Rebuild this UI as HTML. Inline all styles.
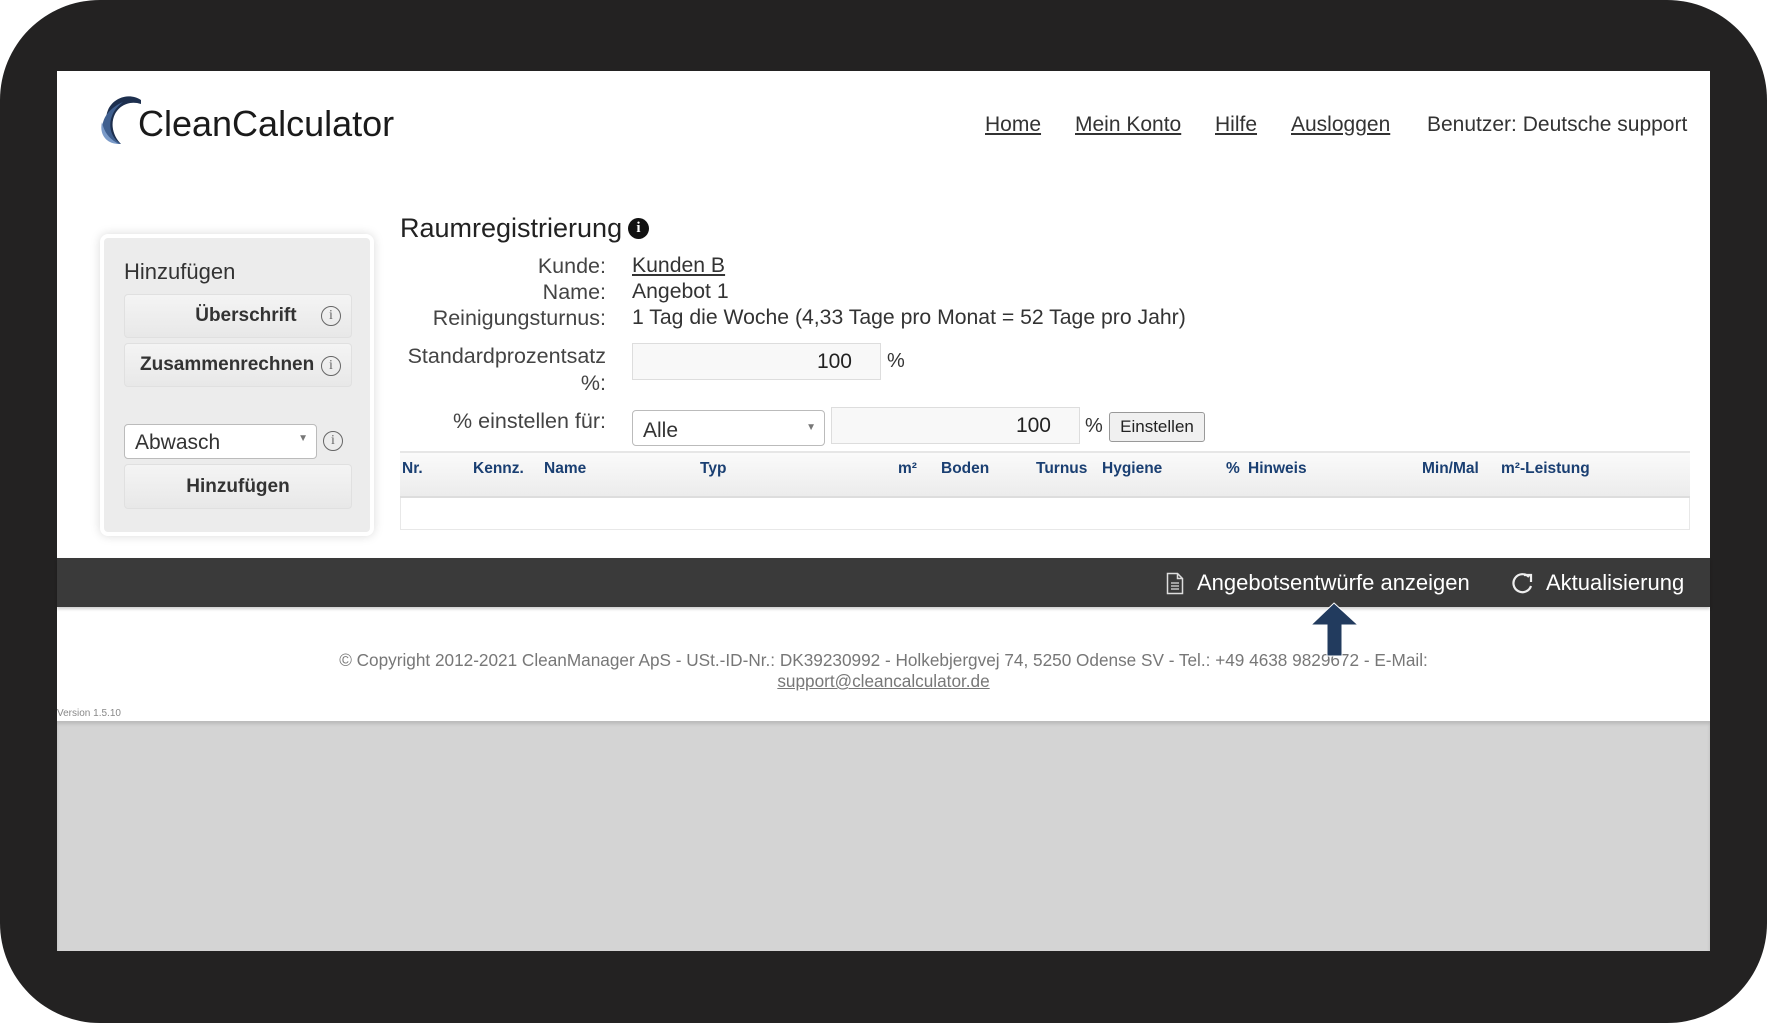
<!DOCTYPE html>
<html><head><meta charset="utf-8"><style>
*{box-sizing:border-box;margin:0;padding:0}
body{width:1767px;height:1023px;background:#fff;font-family:"Liberation Sans",sans-serif;position:relative;overflow:hidden}
.frame{position:absolute;left:0;top:0;width:1767px;height:1023px;background:#232222;border-radius:100px}
.page{position:absolute;left:57px;top:71px;width:1653px;height:650px;background:#fff}
.gray{position:absolute;left:57px;top:721px;width:1653px;height:230px;background:#d4d4d4;box-shadow:inset 0 3px 3px rgba(0,0,0,.12)}
.a{position:absolute;white-space:nowrap}
.nav{font-size:21px;color:#333;top:113px}
.nav u{text-decoration:underline}
.side{position:absolute;left:100px;top:234px;width:274px;height:302px;background:#ececec;border:4px solid #fff;border-radius:8px;box-shadow:0 0 10px rgba(0,0,0,.15)}
.btn{position:absolute;left:124px;width:228px;background:linear-gradient(#f4f4f4,#e8e8e8);border:1px solid #e0e0e0;border-radius:4px;font-weight:bold;font-size:19px;color:#333;text-align:center}
.ic{display:inline-block;width:20px;height:20px;border:1.5px solid #666;border-radius:50%;font:14px "Liberation Serif",serif;color:#666;text-align:center;line-height:18px}
.lbl{font-size:21.5px;color:#444;text-align:right;width:320px;left:286px}
.val{font-size:21.2px;color:#333;left:632px}
.inp{position:absolute;border:1px solid #ddd;background:#f8f8f8;font-size:21px;color:#222;text-align:right;padding-right:28px}
.th{position:absolute;top:460px;font-size:15.5px;font-weight:bold;color:#1a3f72}
</style></head><body>
<div class="frame"></div>
<div class="page"></div>
<div class="gray"></div>

<svg class="a" style="left:97px;top:94px" width="48" height="52" viewBox="0 0 48 52">
<path d="M44 6 C32 -2 16 4 11 16 C6 28 10 44 24 50 C16 42 13 30 18 20 C22 12 32 6 44 10Z" fill="#1d2f4e"/>
<path d="M26 8 C12 14 3 26 6 38 C8 46 16 50 24 50 C14 44 11 32 15 22 C17 16 21 12 26 8Z" fill="#3f5f8f"/>
<path d="M5 28 C2 40 9 50 22 50 C12 45 7 38 5 28Z" fill="#7a9ac8"/>
</svg>
<div class="a" style="left:138px;top:104px;font-size:36px;color:#1a1a1a;line-height:40px">CleanCalculator</div>

<div class="a nav" style="left:985px"><u>Home</u></div>
<div class="a nav" style="left:1075px"><u>Mein Konto</u></div>
<div class="a nav" style="left:1215px"><u>Hilfe</u></div>
<div class="a nav" style="left:1291px"><u>Ausloggen</u></div>
<div class="a nav" style="left:1427px">Benutzer: Deutsche support</div>

<div class="side"></div>
<div class="a" style="left:124px;top:259px;font-size:22px;color:#333">Hinzufügen</div>
<div class="btn" style="top:294px;height:44px;line-height:42px">&nbsp;&nbsp;&nbsp;Überschrift<span class="ic" style="position:absolute;right:10px;top:11px">i</span></div>
<div class="btn" style="top:343px;height:44px;line-height:42px;text-align:left;padding-left:15px">Zusammenrechnen<span class="ic" style="position:absolute;right:10px;top:12px">i</span></div>
<div class="a" style="left:124px;top:424px;width:193px;height:35px;background:#fff;border:1px solid #bbb;border-radius:4px;font-size:21px;color:#333;padding:6px 10px">Abwasch<span style="position:absolute;right:8px;top:8px;font-size:10px;color:#777">▼</span></div>
<span class="ic a" style="left:323px;top:431px">i</span>
<div class="btn" style="top:464px;height:45px;line-height:43px">Hinzufügen</div>

<div class="a" style="left:400px;top:213px;font-size:27px;color:#222">Raumregistrierung</div>
<div class="a" style="left:628px;top:218px;width:21px;height:21px;border-radius:50%;background:#111;color:#fff;font:bold 15px 'Liberation Serif',serif;text-align:center;line-height:21px">i</div>

<div class="a lbl" style="top:254px">Kunde:</div>
<div class="a val" style="top:254px"><u>Kunden B</u></div>
<div class="a lbl" style="top:280px">Name:</div>
<div class="a val" style="top:280px">Angebot 1</div>
<div class="a lbl" style="top:306px">Reinigungsturnus:</div>
<div class="a val" style="top:306px">1 Tag die Woche (4,33 Tage pro Monat = 52 Tage pro Jahr)</div>
<div class="a lbl" style="top:344px">Standardprozentsatz</div>
<div class="a lbl" style="top:371px">%:</div>
<div class="inp" style="left:632px;top:343px;width:249px;height:37px;line-height:35px">100</div>
<div class="a" style="left:887px;top:350px;font-size:20px;color:#333">%</div>
<div class="a lbl" style="top:409px">% einstellen für:</div>
<div class="a" style="left:632px;top:410px;width:193px;height:36px;background:#fff;border:1px solid #bbb;border-radius:4px;font-size:21px;color:#333;padding:8px 10px">Alle<span style="position:absolute;right:8px;top:11px;font-size:10px;color:#777">▼</span></div>
<div class="inp" style="left:831px;top:407px;width:249px;height:37px;line-height:35px">100</div>
<div class="a" style="left:1085px;top:415px;font-size:20px;color:#333">%</div>
<div class="a" style="left:1109px;top:412px;width:96px;height:30px;background:#f0f0f0;border:1px solid #999;border-radius:3px;font-size:17px;color:#222;text-align:center;line-height:28px">Einstellen</div>

<div class="a" style="left:400px;top:451px;width:1290px;height:47px;background:linear-gradient(#fafafa,#ececec);border-top:2px solid #e6e6e6;border-bottom:2px solid #ddd"></div>
<div class="a" style="left:400px;top:498px;width:1290px;height:32px;border:1px solid #e8e8e8;border-top:none"></div>
<div class="th" style="left:402px">Nr.</div>
<div class="th" style="left:473px">Kennz.</div>
<div class="th" style="left:544px">Name</div>
<div class="th" style="left:700px">Typ</div>
<div class="th" style="left:898px">m²</div>
<div class="th" style="left:941px">Boden</div>
<div class="th" style="left:1036px">Turnus</div>
<div class="th" style="left:1102px">Hygiene</div>
<div class="th" style="left:1226px">%</div>
<div class="th" style="left:1248px">Hinweis</div>
<div class="th" style="left:1422px">Min/Mal</div>
<div class="th" style="left:1501px">m²-Leistung</div>

<div class="a" style="left:57px;top:558px;width:1653px;height:49px;background:#3a3a3a;box-shadow:0 2px 3px rgba(0,0,0,.2)"></div>
<svg class="a" style="left:1166px;top:572px" width="18" height="23" viewBox="0 0 18 23"><path d="M1.5 1.5h10l5 5v15h-15z M11.5 1.5v5h5" fill="none" stroke="#ddd" stroke-width="1.5"/><path d="M5 11h8M5 14h8M5 17h8" stroke="#ddd" stroke-width="1.3"/></svg>
<div class="a" style="left:1197px;top:570px;font-size:22px;color:#fff">Angebotsentwürfe anzeigen</div>
<svg class="a" style="left:1511px;top:572px" width="23" height="23" viewBox="0 0 23 23"><path d="M18 5 A9 9 0 1 0 20 14" fill="none" stroke="#eee" stroke-width="2.2"/><path d="M13 3h7v7" fill="none" stroke="#eee" stroke-width="2.2"/></svg>
<div class="a" style="left:1546px;top:570px;font-size:22px;color:#fff">Aktualisierung</div>

<div class="a" style="left:57px;top:650px;width:1653px;text-align:center;font-size:17.2px;color:#777;line-height:21px">© Copyright 2012-2021 CleanManager ApS - USt.-ID-Nr.: DK39230992 - Holkebjergvej 74, 5250 Odense SV - Tel.: +49 4638 9829672 - E-Mail:<br><u>support@cleancalculator.de</u></div>
<div class="a" style="left:57px;top:708px;font-size:10px;color:#888">Version 1.5.10</div>

<svg class="a" style="left:1309px;top:602px" width="52" height="56" viewBox="0 0 52 56"><path d="M25 1 L49 23 L33 23 L33 54 L18 54 L18 23 L2 23 Z" fill="#223b5e" stroke="#fff" stroke-width="1"/></svg>
</body></html>
